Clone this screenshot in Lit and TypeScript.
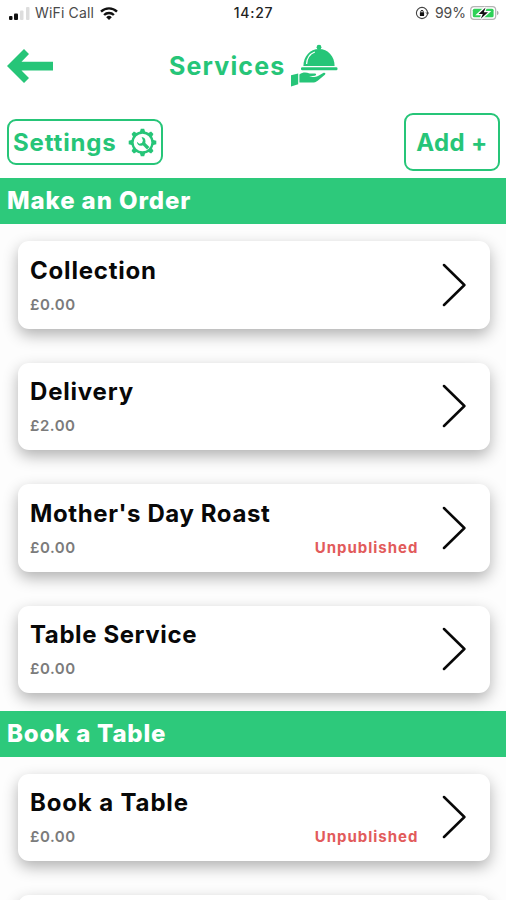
import { LitElement, html, css, svg, nothing } from "lit";
import { customElement, property } from "lit/decorators.js";

interface Service {
  name: string;
  price: string;
  unpublished?: boolean;
  spacing: number;
}

@customElement("status-bar")
class StatusBar extends LitElement {
  static styles = css`
    :host {
      display: grid;
      grid-template-columns: 1fr auto 1fr;
      align-items: center;
      height: 26px;
      padding: 0 7px 0 9px;
      font: 400 14px/26px Inter, sans-serif;
      color: #4a4a4a;
    }
    .side { display: flex; align-items: center; }
    .right { justify-content: flex-end; }
    .carrier { margin-left: 5px; letter-spacing: 0.15px; }
    .time { font-weight: 500; color: #222; letter-spacing: 0.7px; margin-right: 1px; }
    .percent { margin: 0 4px 0 6px; letter-spacing: 0; }
    .wifi { margin-left: 6px; }
    svg { display: block; flex: none; }
  `;
  render() {
    return html`
      <div class="side">
        <svg width="21" height="13" viewBox="0 0 21 13">
          <rect x="0" y="9" width="3.5" height="4" rx="1" fill="#111" />
          <rect x="5" y="6.5" width="4" height="6.5" rx="1" fill="#111" />
          <rect x="11" y="3.5" width="3.5" height="9.5" rx="1" fill="#ddd" />
          <rect x="17" y="0" width="3.5" height="13" rx="1" fill="#ddd" />
        </svg>
        <span class="carrier">WiFi Call</span>
        <svg class="wifi" width="18" height="13" viewBox="0 0 18 13" fill="none" stroke="#111" stroke-width="2.4">
          <path d="M1 4.6a11.5 11.5 0 0 1 16 0M4.1 8a7 7 0 0 1 9.8 0" />
          <path d="M9 13 6.2 10.2a4 4 0 0 1 5.6 0Z" fill="#111" stroke="none" />
        </svg>
      </div>
      <span class="time">14:27</span>
      <div class="side right">
        <svg width="14" height="14" viewBox="0 0 14 14" fill="none" stroke="#444">
          <circle cx="7" cy="7" r="5.6" stroke-width="1.1" />
          <rect x="4.9" y="6.2" width="4.2" height="3.8" rx=".6" fill="#111" stroke="none" />
          <path d="M5.8 6.5V5.6a1.2 1.2 0 0 1 2.4 0v.9" stroke="#111" />
          <path d="m11 6.4 1.6 1.8 1.2-1.8" />
        </svg>
        <span class="percent">99%</span>
        <svg width="29" height="14" viewBox="0 0 29 14">
          <rect x=".7" y=".7" width="25" height="12.6" rx="3.3" fill="#fff" stroke="#b4b4b4" stroke-width="1.2" />
          <rect x="2.8" y="2.8" width="20.8" height="8.4" rx="1.5" fill="#2fd158" />
          <path d="M27 4.8v4.4q1.6-.6 1.6-2.2T27 4.8Z" fill="#aaa" />
          <path d="M15.6 1.4 8.6 8h4.2l-2 4.8L18 6.2h-4.2Z" fill="#111" stroke="#fff" stroke-width="2.6" paint-order="stroke" />
        </svg>
      </div>
    `;
  }
}

@customElement("service-card")
class ServiceCard extends LitElement {
  @property({ attribute: false }) service?: Service;
  static styles = css`
    :host {
      display: flex;
      box-sizing: border-box;
      height: 87.5px;
      padding: 0 24.5px 0 12px;
      border-radius: 11px;
      background: #fff;
      box-shadow: 0 6px 15px rgba(0, 0, 0, 0.3);
      align-items: center;
      font-family: Inter, sans-serif;
    }
    .body { flex: 1; padding-top: 1px; }
    .name { font-size: 24px; line-height: 34px; font-weight: 700; color: #080808; white-space: nowrap; }
    .meta { display: flex; justify-content: space-between; margin-right: 24px; font-size: 15px; line-height: 24px; padding-top: 5px; font-weight: 600; }
    .price { color: #7b7b7b; letter-spacing: 0.5px; }
    .flag { color: #e25b5b; font-weight: 700; letter-spacing: 1px; margin-right: -1px; }
    svg { display: block; flex: none; }
  `;
  render() {
    const s = this.service;
    if (!s) return nothing;
    return html`
      <div class="body">
        <div class="name" style="letter-spacing:${s.spacing}px">${s.name}</div>
        <div class="meta">
          <span class="price">${s.price}</span>
          ${s.unpublished ? html`<span class="flag">Unpublished</span>` : nothing}
        </div>
      </div>
      <svg width="24" height="44" viewBox="0 0 24 44" fill="none" stroke="#080808" stroke-width="2.5" stroke-linecap="round" stroke-linejoin="round">
        <path d="M2 2 22.4 22 2 42" />
      </svg>
    `;
  }
}

@customElement("app-root")
class AppRoot extends LitElement {
  static styles = css`
    :host {
      display: block;
      height: 900px;
      overflow: hidden;
      background: #fff;
      color: #26c578;
      font-family: Inter, sans-serif;
    }
    svg { display: block; flex: none; }
    header { display: grid; grid-template-columns: 162px 1fr; height: 80px; align-items: center; padding-left: 7px; }
    .title { display: flex; align-items: center; font-size: 25px; font-weight: 700; letter-spacing: 1.15px; }
    .title svg { margin-left: 5px; }
    .tools { display: flex; align-items: center; justify-content: space-between; height: 72px; padding: 0 6px 0 7px; font-size: 24px; font-weight: 700; }
    .btn { display: flex; align-items: center; box-sizing: border-box; border: 2px solid #26c578; border-radius: 9px; white-space: nowrap; }
    .settings { width: 156px; height: 46px; padding: 0 4px; justify-content: space-between; letter-spacing: 0.85px; }
    .add { width: 96px; height: 58px; justify-content: center; letter-spacing: 0.4px; }
    h2 { margin: 0; height: 46px; box-sizing: border-box; padding-left: 7px; background: #2dc97b; color: #fff; font-size: 24px; line-height: 46px; font-weight: 800; }
    .order { letter-spacing: 0.9px; }
    .book { letter-spacing: 0.8px; }
    .list { display: flex; flex-direction: column; gap: 34px; padding: 17px 16px 17.5px 18px; background: #fdfdfd; }
  `;

  private orders: Service[] = [
    { name: "Collection", price: "£0.00", spacing: 0.8 },
    { name: "Delivery", price: "£2.00", spacing: 0.8 },
    { name: "Mother's Day Roast", price: "£0.00", unpublished: true, spacing: 0.6 },
    { name: "Table Service", price: "£0.00", spacing: 0.6 },
  ];
  private bookings: Service[] = [
    { name: "Book a Table", price: "£0.00", unpublished: true, spacing: 0.85 },
  ];

  private gear() {
    const teeth = [0, 45, 90, 135, 180, 225, 270, 315];
    return html`<svg width="29" height="29" viewBox="0 0 29 29" fill="none" stroke="currentColor">
      <circle cx="14.5" cy="14.5" r="10" stroke-width="2.3" />
      ${teeth.map((a) => svg`<path d="M11.7 4.5 12.8 .7h3.4l1.1 3.8Z" fill="currentColor" stroke="none" transform="rotate(${a} 14.5 14.5)" />`)}
      <path d="m14.6 14.6 5.6 5.6" stroke-width="3.4" />
      <path d="M13.6 9.1a4.3 4.3 0 1 1-4.7 4.7l2.3 2 2.9-.7.8-2.9Z" fill="currentColor" stroke="none" />
    </svg>`;
  }

  render() {
    return html`
      <status-bar></status-bar>
      <header>
        <svg width="46" height="34" viewBox="0 0 46 34" fill="currentColor">
          <path d="M17 0 22 5 14.5 12.8H46v8.6H14.5L22 29l-5 5L0 17Z" />
        </svg>
        <div class="title">
          <span>Services</span>
          <svg width="48" height="44" viewBox="0 0 48 44" fill="currentColor">
            <circle cx="29" cy="3.2" r="2.4" />
            <path d="M13.4 22C13.4 12.5 20 5 29 5s15.6 7.5 15.6 17Z" />
            <path d="M16.6 20c.2-5.8 3.3-10 8.2-12" fill="none" stroke="#fff" stroke-width="1.3" />
            <rect x="11" y="23.2" width="36.5" height="3" rx="1.2" />
            <path d="m1 31.2 7.2-1.7v10.8L1 42.5Z" />
            <path d="M9.4 30.4c3.4-2.5 6.5-2.4 10.2-1h5.2c1.8 0 1.8 2 0 2.4l-5.7.8c3.8.6 7 .3 9.8-1.2l4.3-2.3c1.6-.8 3 .4 1.7 1.6l-7.2 6c-1.6 1.3-3.4 1.8-5.6 1.8H9.4Z" />
          </svg>
        </div>
      </header>
      <div class="tools">
        <div class="btn settings"><span>Settings</span>${this.gear()}</div>
        <div class="btn add">Add +</div>
      </div>
      <h2 class="order">Make an Order</h2>
      <div class="list">${this.orders.map((s) => html`<service-card .service=${s}></service-card>`)}</div>
      <h2 class="book">Book a Table</h2>
      <div class="list">
        ${this.bookings.map((s) => html`<service-card .service=${s}></service-card>`)}
        <service-card></service-card>
      </div>
    `;
  }
}
